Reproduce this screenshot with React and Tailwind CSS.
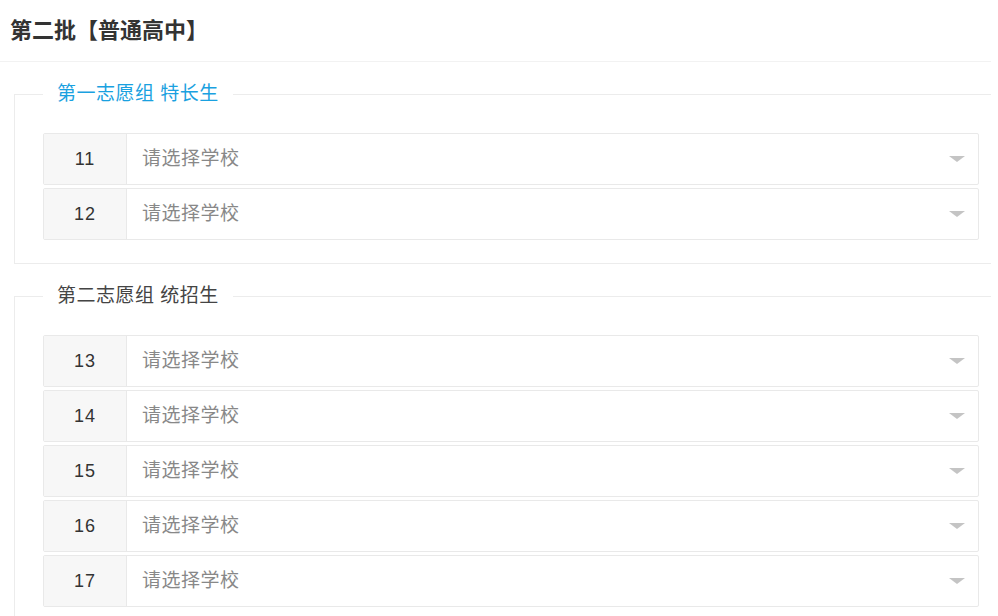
import React from 'react';

const FONT = { fontFamily: '"Liberation Sans", "Noto Sans CJK SC", sans-serif' };

const groups = [
  { title: '第一志愿组 特长生', active: true, rows: [11, 12] },
  { title: '第二志愿组 统招生', active: false, rows: [13, 14, 15, 16, 17] },
];

function SchoolRow({ num }) {
  return (
    <div className="flex h-[52px] rounded-[2px] border border-[#e9e9e9] bg-white">
      <div className="flex w-[83px] shrink-0 items-center justify-center border-r border-[#e9e9e9] bg-[#f7f7f7] text-[18px] tracking-[1px] text-[#333]">
        {num}
      </div>
      <div className="flex flex-1 items-center justify-between pl-[15px] pr-[13px] text-[19px] tracking-[0.5px] text-[#888]">
        <span>请选择学校</span>
        <span className="h-0 w-0 border-x-[8px] border-t-[6px] border-x-transparent border-t-[#c4c4c4]" />
      </div>
    </div>
  );
}

function Group({ title, active, rows }) {
  return (
    <fieldset className="ml-[14px] border border-r-0 border-[#ececec] pb-[23px] pl-[28px] pr-[12px] pt-[29px]">
      <legend
        className={`px-[14px] text-[19px] leading-[20px] tracking-[0.5px] ${active ? 'text-[#1aa1e0]' : 'text-[#444]'}`}
      >
        {title}
      </legend>
      <div className="flex flex-col gap-[3px]">
        {rows.map((n) => (
          <SchoolRow key={n} num={n} />
        ))}
      </div>
    </fieldset>
  );
}

export default function App() {
  return (
    <div className="h-[616px] w-[998px] overflow-hidden bg-white" style={FONT}>
      <div className="w-[991px]">
        <div className="flex h-[62px] items-center border-b border-[#f2f2f2] pl-[10px] text-[22px] font-bold text-[#333]">
          第二批【普通高中】
        </div>
        <div className="mt-[22px] flex flex-col gap-[22px]">
          {groups.map((g) => (
            <Group key={g.title} {...g} />
          ))}
        </div>
      </div>
    </div>
  );
}
